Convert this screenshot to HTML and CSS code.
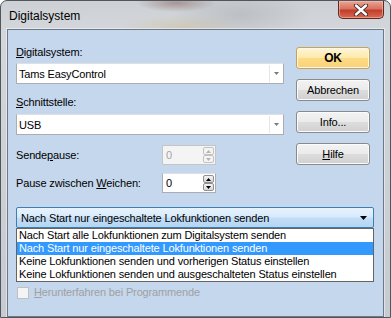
FILE: index.html
```html
<!DOCTYPE html>
<html lang="de">
<head>
    <meta charset="UTF-8">
    <title>Digitalsystem</title>
    <link rel="stylesheet" href="styles.css">
</head>
<body>
    <div class="window">
        <div class="titlebar">
            <span class="title">Digitalsystem</span>
            <div class="close">
                <svg width="16" height="12" viewBox="0 0 16 12">
                    <path d="M3 1.5 L13 10.5 M13 1.5 L3 10.5" stroke="#3a2a28" stroke-width="4.2" stroke-linecap="round"/>
                    <path d="M3 1.5 L13 10.5 M13 1.5 L3 10.5" stroke="#ffffff" stroke-width="2.4" stroke-linecap="round"/>
                </svg>
            </div>
        </div>

        <div class="client">
            <div class="top">
                <div class="form">
                    <div class="lbl first"><u>D</u>igitalsystem:</div>
                    <div class="combo">
                        <span class="value">Tams EasyControl</span>
                        <span class="drop"><svg width="5" height="3" viewBox="0 0 5 3"><path d="M0 0 H5 L2.5 3 Z" fill="#7a7a7a"/></svg></span>
                    </div>
                    <div class="lbl second"><u>S</u>chnittstelle:</div>
                    <div class="combo">
                        <span class="value">USB</span>
                        <span class="drop"><svg width="5" height="3" viewBox="0 0 5 3"><path d="M0 0 H5 L2.5 3 Z" fill="#7a7a7a"/></svg></span>
                    </div>
                    <div class="row first-row">
                        <span class="row-label">Sende<u>p</u>ause:</span>
                        <div class="spin disabled">
                            <span class="spin-value">0</span>
                            <div class="spin-btns">
                                <span class="sb"><svg width="5" height="3" viewBox="0 0 5 3"><path d="M0 3 H5 L2.5 0 Z" fill="#b4b4b4"/></svg></span>
                                <span class="sb"><svg width="5" height="3" viewBox="0 0 5 3"><path d="M0 0 H5 L2.5 3 Z" fill="#b4b4b4"/></svg></span>
                            </div>
                        </div>
                    </div>
                    <div class="row">
                        <span class="row-label">Pause zwischen <u>W</u>eichen:</span>
                        <div class="spin">
                            <span class="spin-value">0</span>
                            <div class="spin-btns">
                                <span class="sb"><svg width="5" height="3" viewBox="0 0 5 3"><path d="M0 3 H5 L2.5 0 Z" fill="#000"/></svg></span>
                                <span class="sb"><svg width="5" height="3" viewBox="0 0 5 3"><path d="M0 0 H5 L2.5 3 Z" fill="#000"/></svg></span>
                            </div>
                        </div>
                    </div>
                </div>

                <div class="buttons">
                    <button class="btn default">OK</button>
                    <button class="btn">Abbrechen</button>
                    <button class="btn">Info...</button>
                    <button class="btn"><u>H</u>ilfe</button>
                </div>
            </div>

            <div class="select-open">
                <span>Nach Start nur eingeschaltete Lokfunktionen senden</span>
                <svg width="7" height="4" viewBox="0 0 7 4"><path d="M0 0 H7 L3.5 4 Z" fill="#000"/></svg>
            </div>
            <ul class="list">
                <li>Nach Start alle Lokfunktionen zum Digitalsystem senden</li>
                <li class="selected">Nach Start nur eingeschaltete Lokfunktionen senden</li>
                <li>Keine Lokfunktionen senden und vorherigen Status einstellen</li>
                <li>Keine Lokfunktionen senden und ausgeschalteten Status einstellen</li>
            </ul>

            <div class="check">
                <span class="box"></span>
                <span><u>H</u>erunterfahren bei Programmende</span>
            </div>
        </div>
    </div>
</body>
</html>
```

FILE: styles.css
```css
body {
    margin: 0;
    font-family: "Liberation Sans", Arial, sans-serif;
    font-size: 11px;
    letter-spacing: -0.15px;
    color: #000;
}
.window {
    width: 391px;
    height: 318px;
    box-sizing: border-box;
    border: 1px solid #50565c;
    border-radius: 7px 7px 0 0;
    display: flex;
    flex-direction: column;
    background:
        radial-gradient(ellipse 40px 9px at 175px 2px, rgba(110, 60, 50, 0.4), rgba(110, 60, 50, 0)),
        radial-gradient(ellipse 60px 12px at 180px 26px, rgba(200, 180, 130, 0.35), rgba(200, 180, 130, 0)),
        radial-gradient(ellipse 70px 26px at 240px 14px, rgba(130, 130, 135, 0.25), rgba(130, 130, 135, 0)),
        linear-gradient(to bottom, #cdd1d5, #d3d6da 30px, #c6cbd1);
    overflow: hidden;
}
.titlebar {
    height: 28px;
    display: flex;
    align-items: flex-start;
}
.title {
    padding: 8px 0 0 8px;
    font-size: 12px;
    letter-spacing: 0;
    color: #000;
}
.close {
    margin-left: auto;
    margin-right: 6px;
    width: 46px;
    height: 18px;
    box-sizing: border-box;
    border: 1px solid #5b2a24;
    border-top: none;
    border-radius: 0 0 5px 5px;
    background: linear-gradient(to bottom, #e9a796 0%, #d7725f 45%, #c23d2a 55%, #d96a52 100%);
    box-shadow: inset 0 0 0 1px rgba(255, 200, 190, 0.5);
    display: flex;
    align-items: center;
    justify-content: center;
}
.client {
    margin: 0 6px;
    flex: 1;
    border: 1px solid #6c7888;
    box-shadow: 0 0 0 1px rgba(255, 255, 255, 0.45);
    background: #c5d7ed;
    padding: 16px 9px 0 8px;
}
.top {
    display: flex;
}
.form {
    width: 268px;
}
.lbl {
    line-height: 13px;
    margin-bottom: 4px;
}
.lbl.second {
    margin-top: 12px;
    margin-bottom: 5px;
}
.combo {
    height: 21px;
    box-sizing: border-box;
    border: 1px solid #abadb3;
    border-top-color: #e0e0e0;
    background: #fff;
    display: flex;
    align-items: center;
    padding-left: 2px;
}
.combo .drop {
    margin-left: auto;
    width: 13px;
    height: 17px;
    border-left: 1px solid #e6e6e6;
    display: flex;
    align-items: center;
    justify-content: center;
}
.row {
    display: flex;
    align-items: center;
    margin-top: 8px;
}
.row.first-row {
    margin-top: 10px;
}
.row-label {
    width: 146px;
}
.spin {
    width: 54px;
    height: 20px;
    box-sizing: border-box;
    border: 1px solid #abadb3;
    border-top-color: #e0e0e0;
    background: #fff;
    display: flex;
    align-items: center;
    padding-left: 3px;
}
.spin.disabled {
    background: #f4f4f4;
    border-color: #c5c5c5;
    color: #a5a5a5;
}
.spin-btns {
    margin-left: auto;
    margin-right: 1px;
    display: flex;
    flex-direction: column;
}
.sb {
    width: 11px;
    height: 8px;
    box-sizing: border-box;
    border: 1px solid #8e8f8f;
    border-radius: 2px;
    background: linear-gradient(to bottom, #f4f4f4, #d8d8d8);
    display: flex;
    align-items: center;
    justify-content: center;
}
.disabled .sb {
    border-color: #c2c2c2;
    background: #f4f4f4;
}
.buttons {
    margin-left: 12px;
    margin-top: 1px;
    display: flex;
    flex-direction: column;
    gap: 10px;
}
.btn {
    width: 74px;
    height: 22px;
    padding: 0;
    font-family: inherit;
    font-size: 11px;
    letter-spacing: -0.15px;
    color: #000;
    border: 1px solid #8a8a8a;
    border-radius: 3px;
    background: linear-gradient(to bottom, #f3f3f3 0%, #ebebeb 48%, #dddddd 52%, #d0d0d0 100%);
    box-shadow: inset 0 0 0 1px #fbfbfb;
}
.btn.default {
    font-weight: bold;
    font-size: 12px;
    border-color: #c5a45a;
    background: linear-gradient(to bottom, #fff5d8 0%, #fde9a9 48%, #fcdb84 52%, #f9d27a 100%);
    box-shadow: inset 0 0 0 1px #fff8e0;
}
.select-open {
    margin-top: 14px;
    height: 21px;
    box-sizing: border-box;
    border: 1px solid #3c7fb1;
    border-radius: 2px;
    background: linear-gradient(to bottom, #e7f3fd 0%, #d6eafb 48%, #c2def7 52%, #b5d5f2 100%);
    display: flex;
    align-items: center;
    justify-content: space-between;
    padding: 0 6px 0 4px;
}
.list {
    margin: 0;
    padding: 0;
    list-style: none;
    border: 1px solid #646464;
    background: #fff;
}
.list li {
    height: 13px;
    line-height: 13px;
    padding-left: 2px;
    white-space: nowrap;
}
.list li.selected {
    background: #3399ff;
    color: #fff;
}
.check {
    margin-top: 4px;
    display: flex;
    align-items: center;
    gap: 5px;
    color: #a0a0a0;
    line-height: 13px;
    padding-left: 1px;
}
.check .box {
    width: 12px;
    height: 12px;
    box-sizing: border-box;
    border: 1px solid #c0c0c0;
    background: #f4f4f4;
}
```
